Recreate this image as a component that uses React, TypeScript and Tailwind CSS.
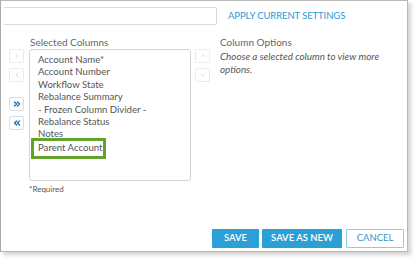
import React from 'react';
import { ChevronRight, ChevronLeft, ChevronUp, ChevronDown, ChevronsRight, ChevronsLeft } from 'lucide-react';

const columns = [
  'Account Name*',
  'Account Number',
  'Workflow State',
  'Rebalance Summary',
  '- Frozen Column Divider -',
  'Rebalance Status',
  'Notes',
];

function ArrowBox({ children, active }: { children: React.ReactNode; active?: boolean }) {
  return (
    <div
      className={
        'w-[15px] h-[14px] flex items-center justify-center rounded-[2px] border ' +
        (active ? 'border-[#dcdcdc] text-[#1b78c2]' : 'border-[#ececec] text-[#cfcfcf]')
      }
    >
      {children}
    </div>
  );
}

export default function App() {
  return (
    <div className="w-[417px] h-[261px] bg-white font-['Lato','Liberation_Sans',sans-serif] text-[#555]">
      <div className="w-[408px] h-[252px] bg-white border border-[#b8b8b8] border-l-[#a8a8a8] shadow-[3px_3px_4px_rgba(0,0,0,0.18)] flex flex-col">
        {/* top row */}
        <div className="flex items-center pt-[6px]">
          <div className="ml-[3px] w-[213px] h-[18px] border border-l-0 border-[#dadada] rounded-r-[2px]"></div>
          <span className="ml-[11px] text-[9.5px] tracking-[-0.1px] text-[#2a9ad4] uppercase">Apply Current Settings</span>
        </div>

        {/* main area */}
        <div className="flex items-start mt-[11px]">
          <div className="ml-[8px] pt-[13px] flex flex-col">
            <ArrowBox><ChevronRight size={8} strokeWidth={2} /></ArrowBox>
            <div className="h-[5px]"></div>
            <ArrowBox><ChevronLeft size={8} strokeWidth={2} /></ArrowBox>
            <div className="h-[15px]"></div>
            <ArrowBox active><ChevronsRight size={10} strokeWidth={3.5} /></ArrowBox>
            <div className="h-[5px]"></div>
            <ArrowBox active><ChevronsLeft size={10} strokeWidth={3.5} /></ArrowBox>
          </div>

          <div className="ml-[5px] flex flex-col">
            <div className="h-[13px] leading-[13px] text-[10px] text-[#666] pl-[1px]">Selected Columns</div>
            <div className="w-[162px] h-[132px] border border-[#d4d4d4] rounded-[3px] pt-[4px] pl-[1px] flex flex-col">
              {columns.map((c) => (
                <div key={c} className="h-[12.4px] leading-[12.4px] text-[9.6px] text-[#555] pl-[7px] whitespace-nowrap">
                  {c}
                </div>
              ))}
              <div className="relative mt-[-3px] w-[75px] h-[21px] border-[3px] border-[#62a42a] bg-white flex items-center">
                <span className="text-[9.6px] text-[#555] pl-[4px] leading-none whitespace-nowrap">Parent Account</span>
              </div>
            </div>
            <div className="mt-[3px] text-[8px] text-[#555] leading-[10px]">*Required</div>
          </div>

          <div className="ml-[4px] pt-[13px] flex flex-col">
            <ArrowBox><ChevronUp size={8} strokeWidth={2} /></ArrowBox>
            <div className="h-[5px]"></div>
            <ArrowBox><ChevronDown size={8} strokeWidth={2} /></ArrowBox>
          </div>

          <div className="ml-[10px] flex flex-col">
            <div className="h-[13px] leading-[13px] text-[10px] text-[#666]">Column Options</div>
            <div className="mt-[1px] w-[170px] text-[9.8px] leading-[13px] italic text-[#555]">
              Choose a selected column to view more options.
            </div>
          </div>
        </div>

        {/* footer buttons */}
        <div className="mt-auto mb-[3px] mr-[3px] flex justify-end gap-[3px]">
          <button className="w-[47px] h-[19px] bg-[#2b9fd6] text-white text-[9.5px] font-semibold rounded-[1px]">SAVE</button>
          <button className="w-[80px] h-[19px] bg-[#2b9fd6] text-white text-[9.5px] font-semibold rounded-[1px]">SAVE AS NEW</button>
          <button className="ml-[1px] w-[58px] h-[19px] bg-white border border-[#8ccbea] text-[#3a92c4] text-[9.5px] rounded-[1px]">CANCEL</button>
        </div>
      </div>
    </div>
  );
}
